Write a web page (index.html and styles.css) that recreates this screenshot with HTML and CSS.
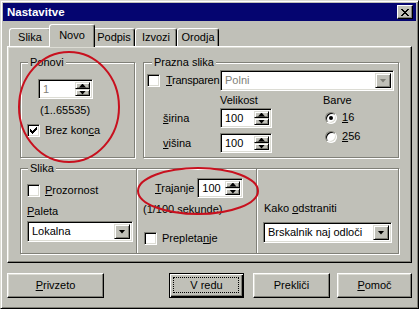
FILE: index.html
```html
<!DOCTYPE html>
<html lang="sl">
<head>
<meta charset="utf-8">
<title>Nastavitve</title>
<link rel="stylesheet" href="styles.css">
</head>
<body>
<div class="window">
  <div class="titlebar">
    <span class="title">Nastavitve</span>
    <span class="close"><svg width="8" height="7" viewBox="0 0 8 7"><path d="M0 0h2v1H0zM6 0h2v1H6zM1 1h2v1H1zM5 1h2v1H5zM2 2h4v1H2zM3 3h2v1H3zM2 4h4v1H2zM1 5h2v1H1zM5 5h2v1H5zM0 6h2v1H0zM6 6h2v1H6z" fill="#000"/></svg></span>
  </div>
  <div class="content">
    <div class="tabs">
      <div class="tab">Slika</div>
      <div class="tab active">Novo</div>
      <div class="tab">Podpis</div>
      <div class="tab">Izvozi</div>
      <div class="tab">Orodja</div>
    </div>
    <div class="panel">
      <div class="row1">
        <fieldset class="group g-ponovi">
          <legend class="lg7">Ponovi</legend>
          <div class="ponovi-body">
            <div class="spin spin-ponovi disabled"><span class="spin-val">1</span><span class="spin-btns"><span class="sb"><i class="ar-up"></i></span><span class="sb"><i class="ar-down"></i></span></span></div>
            <div class="range">(1..65535)</div>
            <div class="check-row"><span class="chk"><svg width="7" height="7" viewBox="0 0 7 7"><path d="M6 0h1v1H6zM5 1h2v1H5zM0 2h1v1H0zM4 2h3v1H4zM0 3h2v1H0zM3 3h3v1H3zM0 4h5v1H0zM1 5h3v1H1zM2 6h1v1H2z" fill="#000"/></svg></span><span>Brez kon<u>c</u>a</span></div>
          </div>
        </fieldset>
        <fieldset class="group g-prazna">
          <legend class="lg8">Prazna slika</legend>
          <div class="prazna-body">
            <div class="row-transp">
              <span class="chk"></span><span class="transp-label"><u>T</u>ransparen</span>
              <div class="combo disabled"><span class="combo-val">Polni</span><span class="combo-btn"><i class="ar-down"></i></span></div>
            </div>
            <div class="size-area">
              <div class="col-labels">
                <div class="lbl-row"><u>š</u>irina</div>
                <div class="lbl-row"><u>v</u>išina</div>
              </div>
              <div class="col-size">
                <div class="col-head">Velikost</div>
                <div class="spin spin-size"><span class="spin-val">100</span><span class="spin-btns"><span class="sb"><i class="ar-up"></i></span><span class="sb"><i class="ar-down"></i></span></span></div>
                <div class="spin spin-size"><span class="spin-val">100</span><span class="spin-btns"><span class="sb"><i class="ar-up"></i></span><span class="sb"><i class="ar-down"></i></span></span></div>
              </div>
              <div class="col-colors">
                <div class="col-head">Barve</div>
                <div class="radio-row"><span class="radio on"></span><span><u>1</u>6</span></div>
                <div class="radio-row"><span class="radio"></span><span><u>2</u>56</span></div>
              </div>
            </div>
          </div>
        </fieldset>
      </div>
      <fieldset class="group g-slika">
        <legend class="lg7">Slika</legend>
        <div class="slika-grid">
          <div class="sc sc-left">
            <div class="check-row"><span class="chk"></span><span><u>P</u>rozornost</span></div>
            <div class="paleta"><u>P</u>aleta</div>
            <div class="combo combo-paleta"><span class="combo-val">Lokalna</span><span class="combo-btn"><i class="ar-down"></i></span></div>
          </div>
          <div class="sc sc-mid">
            <div class="trajanje-row"><span><u>T</u>rajanje</span><div class="spin spin-traj"><span class="spin-val">100</span><span class="spin-btns"><span class="sb"><i class="ar-up"></i></span><span class="sb"><i class="ar-down"></i></span></span></div></div>
            <div class="sek">(1/100 sekunde)</div>
            <div class="check-row prep"><span class="chk"></span><span>Prepleta<u>n</u>je</span></div>
          </div>
          <div class="sc sc-right">
            <div class="kako">Kako <u>o</u>dstraniti</div>
            <div class="combo combo-kako"><span class="combo-val">Brskalnik naj odloči</span><span class="combo-btn"><i class="ar-down"></i></span></div>
          </div>
        </div>
      </fieldset>
    </div>
    <div class="buttons">
      <button class="btn btn-wide"><u>P</u>rivzeto</button>
      <button class="btn btn-default">V redu</button>
      <button class="btn btn-cancel">Prekliči</button>
      <button class="btn btn-help"><u>P</u>omoč</button>
    </div>
  </div>
</div>
<svg class="marks" width="419" height="309" viewBox="0 0 419 309">
  <ellipse cx="69" cy="107" rx="50" ry="55" fill="none" stroke="#c8101e" stroke-width="2"/>
  <ellipse cx="198" cy="191" rx="60" ry="23" fill="none" stroke="#c8101e" stroke-width="2"/>
</svg>
</body>
</html>
```
FILE: styles.css
```css
* { box-sizing: border-box; }
html, body { margin: 0; padding: 0; }
body {
  position: relative;
  width: 419px;
  height: 309px;
  background: #c0c0b8;
  font-family: "Liberation Sans", Arial, sans-serif;
  font-size: 11px;
  line-height: 13px;
  color: #000;
  overflow: hidden;
}
u { text-decoration: underline; text-underline-offset: 1px; }

.window {
  width: 419px;
  height: 309px;
  background: #c0c0b8;
  border: 1px solid;
  border-color: #dcdcd4 #000 #000 #dcdcd4;
  box-shadow: inset 1px 1px #fff, inset -1px -1px #808078;
  padding: 2px;
  display: flex;
  flex-direction: column;
}

.titlebar {
  height: 18px;
  background: #050570;
  display: flex;
  align-items: center;
  padding: 0 3px 0 4px;
}
.title {
  flex: 1;
  color: #fff;
  font-weight: bold;
  font-size: 11.5px;
}
.close {
  width: 16px;
  height: 14px;
  background: #c0c0b8;
  border: 1px solid;
  border-color: #fff #000 #000 #fff;
  box-shadow: inset -1px -1px #808078;
  display: flex;
  align-items: center;
  justify-content: center;
  padding-right: 1px;
}
.close svg { display: block; }

.content { padding: 3px 4px 0 4px; }

/* tabs */
.tabs {
  display: flex;
  align-items: flex-end;
  height: 22px;
  padding-left: 2px;
  position: relative;
  z-index: 1;
}
.tab {
  width: 42px;
  height: 18px;
  padding-top: 2px;
  text-align: center;
  background: #c0c0b8;
  border: 1px solid;
  border-bottom: 0;
  border-color: #fff #000 transparent #fff;
  border-radius: 3px 3px 0 0;
  box-shadow: inset -1px 0 #808078;
}
.tab.active {
  width: 46px;
  height: 23px;
  margin: 0 -2px -1px;
  padding-top: 4px;
  position: relative;
  z-index: 2;
}

/* panel */
.panel {
  height: 217px;
  border: 1px solid;
  border-color: #fff #000 #000 #fff;
  box-shadow: inset -1px -1px #808078, inset 1px 1px #dcdcd4;
  padding: 9px 12px 0 12px;
}
.row1 {
  display: flex;
  gap: 8px;
  height: 102px;
}
.group {
  margin: 0;
  padding: 0;
  min-width: 0;
  border: 1px solid #808078;
  box-shadow: inset 1px 1px #fff, 1px 1px #fff;
}
.group > legend {
  padding: 0 2px;
  line-height: 13px;
  background: #c0c0b8;
}
.lg7 { margin-left: 7px; }
.lg8 { margin-left: 8px; }

.g-ponovi { width: 115px; flex: none; }
.g-prazna { flex: 1; }

.ponovi-body { padding: 10px 0 0 6px; }
.spin-ponovi { width: 55px; height: 20px; margin-left: 11px; }
.range { margin: 5px 0 0 13px; }
.check-row {
  display: flex;
  align-items: center;
  height: 13px;
  gap: 5px;
}
.ponovi-body .check-row { margin-top: 7px; }

/* inputs */
.spin, .combo {
  display: flex;
  background: #fff;
  border: 1px solid;
  border-color: #808078 #fff #fff #808078;
  box-shadow: inset 1px 1px #000, inset -1px -1px #dcdcd4;
  padding: 2px;
}
.spin-val, .combo-val {
  flex: 1;
  padding-left: 2px;
  line-height: 14px;
  white-space: nowrap;
  overflow: hidden;
}
.disabled .spin-val, .disabled .combo-val { color: #808078; }
.spin-btns {
  width: 15px;
  display: flex;
  flex-direction: column;
}
.sb, .combo-btn {
  flex: 1;
  background: #c0c0b8;
  border: 1px solid;
  border-color: #dcdcd4 #000 #000 #dcdcd4;
  box-shadow: inset 1px 1px #fff, inset -1px -1px #808078;
  display: flex;
  align-items: center;
  justify-content: center;
}
.combo-btn { flex: none; width: 16px; }
.ar-up, .ar-down {
  display: block;
  width: 7px;
  height: 4px;
  background: #000;
}
.ar-up { clip-path: polygon(50% 0, 100% 100%, 0 100%); }
.ar-down { clip-path: polygon(0 0, 100% 0, 50% 100%); }
.disabled .combo-btn .ar-down { background: #808078; }

.chk {
  flex: none;
  width: 13px;
  height: 13px;
  background: #fff;
  border: 1px solid;
  border-color: #808078 #fff #fff #808078;
  box-shadow: inset 1px 1px #000, inset -1px -1px #dcdcd4;
  display: flex;
  align-items: center;
  justify-content: center;
}
.chk svg { display: block; }

.radio {
  flex: none;
  width: 12px;
  height: 12px;
  border-radius: 50%;
  background: #fff;
  border: 1px solid;
  border-color: #808078 #fff #fff #808078;
  box-shadow: inset 1px 1px #000, inset -1px -1px #dcdcd4;
  display: flex;
  align-items: center;
  justify-content: center;
}
.radio.on::after {
  content: "";
  width: 4px;
  height: 4px;
  border-radius: 50%;
  background: #000;
}

/* prazna slika */
.prazna-body { padding: 1px 4px 0 3px; }
.row-transp {
  display: flex;
  align-items: center;
  height: 21px;
}
.row-transp .chk { margin-right: 6px; }
.transp-label {
  width: 54px;
  flex: none;
  white-space: nowrap;
  letter-spacing: -0.25px;
}
.row-transp .combo { flex: 1; height: 21px; }
.size-area { display: flex; }
.col-labels { width: 73px; padding-top: 17px; }
.lbl-row { height: 20px; line-height: 20px; padding-left: 16px; }
.lbl-row + .lbl-row { margin-top: 5px; }
.col-size { width: 103px; }
.col-head { height: 17px; padding-top: 3px; }
.spin-size { width: 52px; height: 20px; }
.spin-size + .spin-size { margin-top: 5px; }
.col-colors { flex: 1; }
.radio-row {
  display: flex;
  align-items: center;
  gap: 5px;
  height: 19px;
  padding-left: 2px;
}

/* slika */
.g-slika { margin-top: 4px; height: 92px; }
.slika-grid {
  display: grid;
  grid-template-columns: 115px 120px 1fr;
  margin-top: -6px;
  height: 84px;
}
.sc-mid, .sc-right {
  border-left: 1px solid #808078;
  box-shadow: inset 1px 0 #fff;
}
.sc-left { padding: 15px 0 0 6px; }
.paleta { margin-top: 8px; }
.combo-paleta { width: 106px; height: 21px; margin-top: 3px; }
.sc-mid { padding-top: 9px; }
.trajanje-row {
  display: flex;
  align-items: center;
  padding-left: 18px;
}
.spin-traj { width: 46px; height: 20px; margin-left: 3px; }
.sek { margin: 5px 0 0 6px; }
.prep { margin: 16px 0 0 7px; }
.sc-right { padding: 33px 0 0 6px; }
.kako { padding-left: 1px; }
.combo-kako { width: 129px; height: 21px; margin-top: 7px; }

/* buttons */
.buttons {
  display: flex;
  margin-top: 10px;
}
.btn {
  height: 25px;
  width: 75px;
  padding: 0;
  font: inherit;
  color: #000;
  background: #c0c0b8;
  border: 1px solid;
  border-color: #fff #000 #000 #fff;
  box-shadow: inset -1px -1px #808078, inset 1px 1px #dcdcd4;
  text-align: center;
}
.btn-wide { width: 97px; }
.btn-default {
  margin-left: auto;
  position: relative;
  border-color: #000;
  box-shadow: inset 1px 1px #fff, inset -1px -1px #000, inset -2px -2px #808078;
}
.btn-default::after {
  content: "";
  position: absolute;
  inset: 3px 4px 4px 3px;
  border: 1px dotted #000;
}
.btn-cancel { width: 77px; margin-left: 9px; }
.btn-help { margin-left: 7px; }

.marks {
  position: absolute;
  left: 0;
  top: 0;
  pointer-events: none;
}
```
